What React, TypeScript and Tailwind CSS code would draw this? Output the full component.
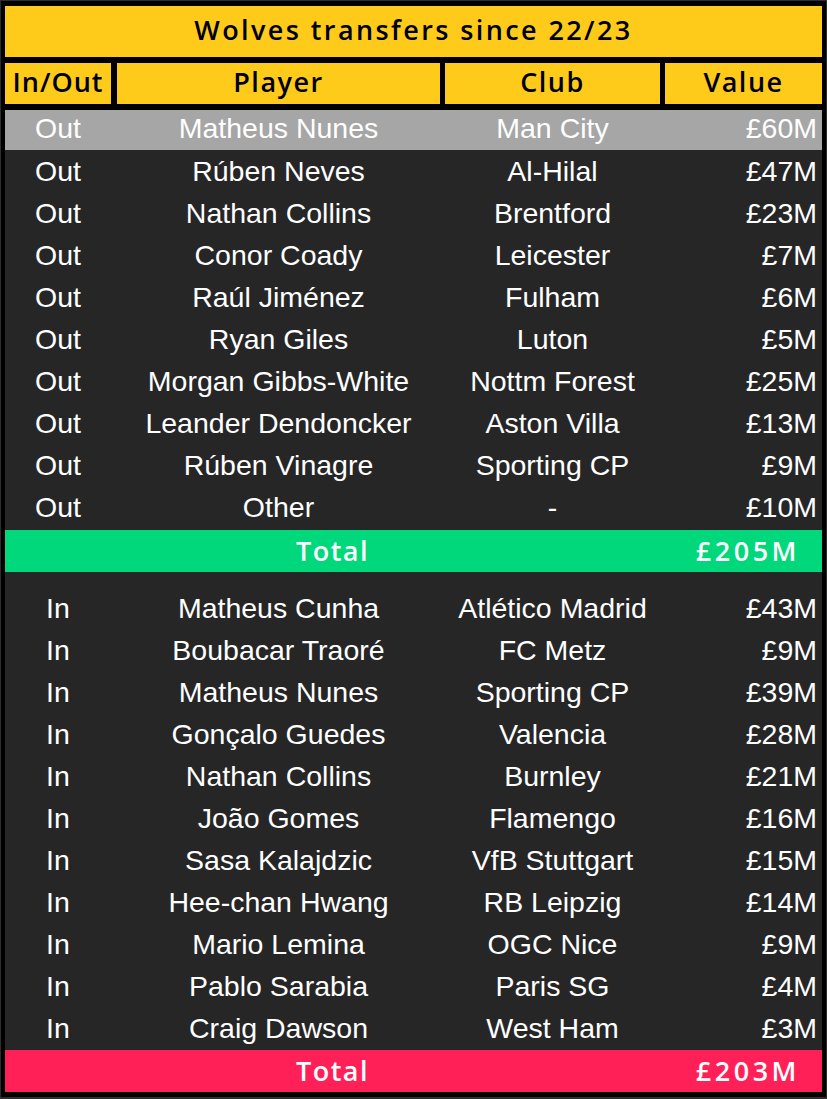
import React from "react";

type Transfer = {
  dir: string;
  player: string;
  club: string;
  value: string;
};

const outs: Transfer[] = [
  { dir: "Out", player: "Matheus Nunes", club: "Man City", value: "£60M" },
  { dir: "Out", player: "Rúben Neves", club: "Al-Hilal", value: "£47M" },
  { dir: "Out", player: "Nathan Collins", club: "Brentford", value: "£23M" },
  { dir: "Out", player: "Conor Coady", club: "Leicester", value: "£7M" },
  { dir: "Out", player: "Raúl Jiménez", club: "Fulham", value: "£6M" },
  { dir: "Out", player: "Ryan Giles", club: "Luton", value: "£5M" },
  { dir: "Out", player: "Morgan Gibbs-White", club: "Nottm Forest", value: "£25M" },
  { dir: "Out", player: "Leander Dendoncker", club: "Aston Villa", value: "£13M" },
  { dir: "Out", player: "Rúben Vinagre", club: "Sporting CP", value: "£9M" },
  { dir: "Out", player: "Other", club: "-", value: "£10M" },
];

const ins: Transfer[] = [
  { dir: "In", player: "Matheus Cunha", club: "Atlético Madrid", value: "£43M" },
  { dir: "In", player: "Boubacar Traoré", club: "FC Metz", value: "£9M" },
  { dir: "In", player: "Matheus Nunes", club: "Sporting CP", value: "£39M" },
  { dir: "In", player: "Gonçalo Guedes", club: "Valencia", value: "£28M" },
  { dir: "In", player: "Nathan Collins", club: "Burnley", value: "£21M" },
  { dir: "In", player: "João Gomes", club: "Flamengo", value: "£16M" },
  { dir: "In", player: "Sasa Kalajdzic", club: "VfB Stuttgart", value: "£15M" },
  { dir: "In", player: "Hee-chan Hwang", club: "RB Leipzig", value: "£14M" },
  { dir: "In", player: "Mario Lemina", club: "OGC Nice", value: "£9M" },
  { dir: "In", player: "Pablo Sarabia", club: "Paris SG", value: "£4M" },
  { dir: "In", player: "Craig Dawson", club: "West Ham", value: "£3M" },
];

function Row({ t, highlight }: { t: Transfer; highlight?: boolean }) {
  return (
    <div
      className={`flex items-center text-[28.5px] leading-none text-white ${
        highlight ? "h-[40px] bg-[#a6a6a6] pb-[3px]" : "h-[42px]"
      }`}
    >
      <div className="w-[106px] text-center">{t.dir}</div>
      <div className="ml-[6px] w-[323px] text-center">{t.player}</div>
      <div className="ml-[5px] w-[215px] text-center">{t.club}</div>
      <div className="ml-[5px] w-[157px] pr-[5px] text-right">{t.value}</div>
    </div>
  );
}

function TotalRow({ value, color }: { value: string; color: string }) {
  return (
    <div
      className={`flex h-[42px] items-center pb-[2px] font-['Open_Sans',sans-serif] text-[27px] font-semibold leading-none tracking-[1.5px] text-white ${color}`}
    >
      <div className="w-[655px] text-center">Total</div>
      <div className="ml-[5px] w-[157px] pr-[22px] text-right tracking-[3.5px]">{value}</div>
    </div>
  );
}

export default function App() {
  return (
    <div
      className="h-[1099px] w-[827px] bg-[#2e2e2e] p-px"
      style={{ fontFamily: '"Liberation Sans", Arial, sans-serif' }}
    >
      <div className="flex flex-col border-x-4 border-y-[5px] border-black bg-black">
        <div className="flex h-[51px] items-center justify-center bg-[#ffcb1b] pb-[3px] font-['Open_Sans',sans-serif] text-[27px] font-semibold tracking-[2.4px] text-black">
          Wolves transfers since 22/23
        </div>
        <div className="mt-[6px] flex h-[41px] font-['Open_Sans',sans-serif] text-[27px] font-semibold tracking-[1.5px] text-black">
          <div className="flex w-[106px] items-center justify-center bg-[#ffcb1b] pb-[2px] tracking-[1px]">In/Out</div>
          <div className="ml-[6px] flex w-[323px] items-center justify-center bg-[#ffcb1b] pb-[2px]">Player</div>
          <div className="ml-[5px] flex w-[215px] items-center justify-center bg-[#ffcb1b] pb-[2px]">Club</div>
          <div className="ml-[5px] flex w-[157px] items-center justify-center bg-[#ffcb1b] pb-[2px]">Value</div>
        </div>
        <div className="mt-[6px] flex flex-col bg-[#262626]">
          {outs.map((t, i) => (
            <Row key={"o" + i} t={t} highlight={i === 0} />
          ))}
          <div className="h-[2px]" />
          <TotalRow value="£205M" color="bg-[#00d87b]" />
          <div className="h-[15px]" />
          {ins.map((t, i) => (
            <Row key={"i" + i} t={t} />
          ))}
          <div className="h-px" />
          <TotalRow value="£203M" color="bg-[#ff2057]" />
        </div>
      </div>
    </div>
  );
}
